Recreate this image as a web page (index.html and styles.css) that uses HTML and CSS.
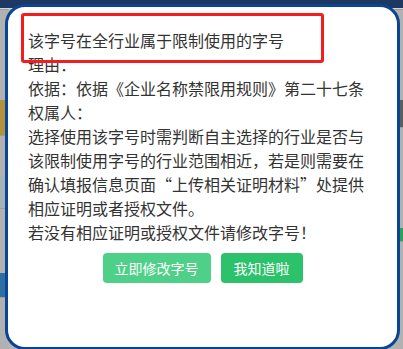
FILE: index.html
```html
<!DOCTYPE html>
<html lang="zh-CN">
<head>
<meta charset="utf-8">
<title>字号提示</title>
<link rel="stylesheet" href="styles.css">
</head>
<body>
<div class="page">
  <div class="topbar"></div>
  <div class="backdrop">
    <div class="side side-left">
      <div class="seg gray s1"></div>
      <div class="seg gold s2"></div>
      <div class="seg gray s3"></div>
      <div class="seg bluegray s4"></div>
      <div class="seg gray s5"></div>
      <div class="seg blue s6"></div>
      <div class="seg gray s7"></div>
    </div>
    <div class="side side-right">
      <div class="seg gray r1"></div>
      <div class="seg dark r2"></div>
      <div class="seg gray r3"></div>
      <div class="seg green r4"></div>
      <div class="seg gray r5"></div>
    </div>
  </div>
  <div class="dialog">
    <div class="message">
      <p class="line">该字号在全行业属于限制使用的字号</p>
      <p class="line">理由：</p>
      <p class="line">依据：依据《企业名称禁限用规则》第二十七条</p>
      <p class="line">权属人：</p>
      <p class="line">选择使用该字号时需判断自主选择的行业是否与<br>该限制使用字号的行业范围相近，若是则需要在<br>确认填报信息页面“上传相关证明材料”处提供<br>相应证明或者授权文件。</p>
      <p class="line">若没有相应证明或授权文件请修改字号！</p>
    </div>
    <div class="actions">
      <button class="btn btn-light" type="button">立即修改字号</button>
      <button class="btn btn-main" type="button">我知道啦</button>
    </div>
  </div>
  <div class="highlight"></div>
</div>
</body>
</html>
```
FILE: styles.css
```css
html, body {
  margin: 0;
  padding: 0;
}
body {
  background: #b3b3b3;
  font-family: "Noto Sans CJK SC", "Noto Sans", "DejaVu Sans", sans-serif;
}
.page {
  position: relative;
  width: 403px;
  height: 349px;
  overflow: hidden;
  background: #b3b3b3;
  display: flex;
  flex-direction: column;
}
.topbar {
  height: 8px;
  background: #1d3962;
  border-bottom: 1px solid #d0d4da;
}
.backdrop {
  flex: 1;
  display: flex;
  justify-content: space-between;
}
.side {
  width: 8px;
  display: flex;
  flex-direction: column;
}
.seg { flex: none; }
.gray { background: #b1b1b1; border-top: 1px solid #9c9c9c; }
.gold { background: #b4923c; }
.bluegray { background: #a6b1b8; }
.blue { background: #2c6fa3; }
.dark { background: #5d5d5d; }
.green { background: #2f9f5a; }
.s1 { height: 90px; }
.s2 { height: 35px; }
.s3 { height: 39px; }
.s4 { height: 33px; }
.s5 { height: 64px; }
.s6 { height: 24px; }
.s7 { flex: 1; }
.r1 { height: 90px; }
.r2 { height: 27px; }
.r3 { height: 100px; }
.r4 { height: 13px; }
.r5 { flex: 1; }

.dialog {
  position: absolute;
  left: 5px;
  top: 4px;
  width: 395px;
  height: 346px;
  box-sizing: border-box;
  background: #ffffff;
  border: 3px solid #0c4495;
  border-radius: 20px;
  padding: 21px 20px 0 20px;
}
.message {
  color: #333333;
  font-size: 16px;
  line-height: 24px;
}
.line {
  margin: 0;
  white-space: nowrap;
}
.actions {
  display: flex;
  justify-content: center;
  gap: 10px;
  margin-top: 9px;
}
.btn {
  height: 30px;
  border: none;
  border-radius: 4px;
  color: #ffffff;
  font-family: "Noto Sans CJK SC", "Noto Sans", sans-serif;
  font-size: 14px;
  line-height: 30px;
  padding: 0;
  cursor: pointer;
}
.btn-light {
  width: 108px;
  background: #4fd088;
}
.btn-main {
  width: 82px;
  background: #2bc26b;
}
.highlight {
  position: absolute;
  left: 21px;
  top: 13px;
  width: 303px;
  height: 50px;
  box-sizing: border-box;
  border: 3px solid #f41d1d;
  border-radius: 3px;
}
```
